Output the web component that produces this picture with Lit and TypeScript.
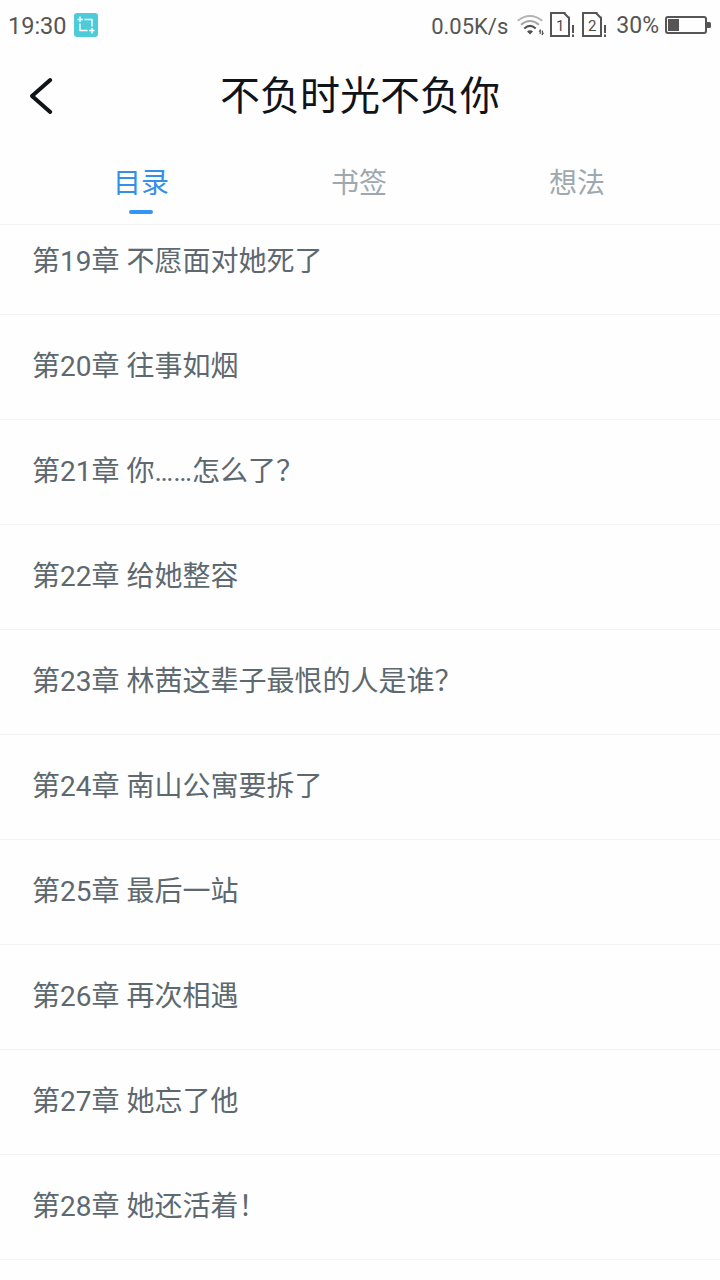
import { LitElement, html, css } from "lit";
import { customElement, property, state } from "lit/decorators.js";
import { classMap } from "lit/directives/class-map.js";

@customElement("sim-icon")
class SimIcon extends LitElement {
  @property() slotNumber = "1";

  static styles = css`
    :host { display: block; width: 26px; height: 28px; }
    svg { display: block; }
    text { font: 15px Roboto, sans-serif; fill: #4c4c4c; }
  `;

  render() {
    return html`
      <svg width="26" height="28" viewBox="0 0 26 28">
        <path d="M1 2H14.6L19 6.6V25H1Z" fill="none" stroke="#555" stroke-width="2" />
        <path d="M14 2L19 7V2.5Z" fill="#fff" />
        <path d="M14 2L19 7" stroke="#555" stroke-width="2" />
        <text x="10.2" y="20" text-anchor="middle">${this.slotNumber}</text>
        <path d="M23 14V22M23 23.6V26" stroke="#555" stroke-width="2" />
      </svg>
    `;
  }
}

@customElement("status-bar")
class StatusBar extends LitElement {
  static styles = css`
    :host {
      display: flex;
      align-items: center;
      height: 50px;
      padding: 0 9px 0 8px;
      box-sizing: border-box;
      font: 24px/50px Roboto, sans-serif;
      color: #555;
      white-space: nowrap;
    }
    svg { display: block; flex: none; }
    .time { width: 58px; padding-top: 2px; font-size: 23.5px; }
    .crop { margin-left: 8px; }
    .speed { margin-left: auto; padding-top: 3px; font-size: 22px; }
    .wifi { margin-left: 9px; }
    .sim { margin-left: 5px; }
    .sim + .sim { margin-left: 6px; }
    .percent { margin-left: 8px; padding-top: 2px; font-size: 23px; }
    .battery { margin-left: 6px; }
  `;

  render() {
    return html`
      <span class="time">19:30</span>
      <svg class="crop" width="24" height="24" viewBox="0 0 24 24">
        <rect width="24" height="24" rx="3" fill="#4dcbd9" />
        <path d="M6 3.5V9M3.5 6.5H8.8M10.5 6.5H18V13.5M6 10.5V17.5H13.5M15 17.5H20.5M18 15V20.5"
          fill="none" stroke="#fff" stroke-width="1.4" />
      </svg>
      <span class="speed">0.05K/s</span>
      <svg class="wifi" width="28" height="24" viewBox="0 0 28 24">
        <g fill="none" stroke-width="2">
          <path d="M0.8 7.7Q13 -1.7 25.2 7.7" stroke="#b4b4b4" />
          <path d="M4 11.7Q13 4.3 22 11.7" stroke="#a4a4a4" />
          <path d="M7.3 15.6Q13 10.2 18.7 15.6" stroke="#505050" />
        </g>
        <path d="M10 18.4Q13 16 16 18.4L13 21.6Z" fill="#505050" />
        <path d="M23.2 16.5V21M25.4 17.5V22" stroke="#555" stroke-width="1.2" />
        <path d="M21.6 18.8L23.4 16.2V18.8ZM25.2 19.8H27.2L25.2 22.4Z" fill="#555" />
      </svg>
      <sim-icon class="sim" slotNumber="1"></sim-icon>
      <sim-icon class="sim" slotNumber="2"></sim-icon>
      <span class="percent">30%</span>
      <svg class="battery" width="46" height="18" viewBox="0 0 46 18">
        <rect x="1" y="1" width="40" height="16" rx="2" fill="none" stroke="#555" stroke-width="2" />
        <rect x="3" y="3" width="11" height="12" fill="#555" />
        <path d="M42 6H44.5Q46 6 46 7.5V10.5Q46 12 44.5 12H42Z" fill="#555" />
      </svg>
    `;
  }
}

@customElement("app-root")
class AppRoot extends LitElement {
  @state() private active = 0;

  private tabs = ["目录", "书签", "想法"];

  private chapters = [
    "第19章 不愿面对她死了",
    "第20章 往事如烟",
    "第21章 你……怎么了？",
    "第22章 给她整容",
    "第23章 林茜这辈子最恨的人是谁？",
    "第24章 南山公寓要拆了",
    "第25章 最后一站",
    "第26章 再次相遇",
    "第27章 她忘了他",
    "第28章 她还活着！",
  ];

  static styles = css`
    :host {
      display: flex;
      flex-direction: column;
      height: 1280px;
      overflow: hidden;
      background: #fefefe;
      font-family: Roboto, "Noto Sans CJK SC", sans-serif;
    }
    status-bar { flex: none; }
    header {
      flex: none;
      display: grid;
      grid-template-columns: 80px 1fr 80px;
      align-items: center;
      height: 92px;
    }
    .back {
      display: block;
      padding: 0 0 0 28px;
      border: 0;
      background: none;
    }
    .back svg { display: block; }
    h1 {
      margin: 0;
      padding-top: 2px;
      text-align: center;
      font-size: 40px;
      line-height: 60px;
      font-weight: 400;
      color: #101418;
    }
    nav {
      flex: none;
      display: grid;
      grid-template-columns: repeat(3, 218px);
      height: 83px;
      box-sizing: border-box;
      padding: 22px 0 0 32px;
      border-bottom: 1px solid #f1f2f3;
    }
    .tab {
      display: flex;
      flex-direction: column;
      align-items: center;
      justify-content: flex-start;
      gap: 6px;
      padding: 0;
      border: 0;
      background: none;
      font: inherit;
      font-size: 28px;
      line-height: 40px;
      color: #9fa8af;
    }
    .tab.active { color: #338fe8; }
    .tab.active::after {
      content: "";
      width: 24px;
      height: 4px;
      border-radius: 2px;
      background: #3695f4;
    }
    .list {
      flex: 1;
      display: flex;
      flex-direction: column;
      justify-content: flex-start;
      margin: -15px 0 0;
      padding: 0;
      list-style: none;
    }
    .chapter {
      flex: none;
      height: 105px;
      box-sizing: border-box;
      padding: 0 32px;
      border-bottom: 1px solid #f1f2f3;
      font-size: 28px;
      line-height: 104px;
      color: #5d686f;
      white-space: nowrap;
    }
  `;

  render() {
    return html`
      <status-bar></status-bar>
      <header>
        <button class="back" aria-label="返回">
          <svg width="26" height="38" viewBox="0 0 26 38">
            <path d="M22.2 3L4 19L22.2 35" fill="none" stroke="#101418" stroke-width="4"
              stroke-linecap="round" stroke-linejoin="round" />
          </svg>
        </button>
        <h1>不负时光不负你</h1>
      </header>
      <nav>
        ${this.tabs.map(
          (label, i) => html`
            <button class=${classMap({ tab: true, active: i === this.active })}
              @click=${() => (this.active = i)}>${label}</button>
          `
        )}
      </nav>
      <ul class="list">
        ${this.chapters.map((title) => html`<li class="chapter">${title}</li>`)}
      </ul>
    `;
  }
}
